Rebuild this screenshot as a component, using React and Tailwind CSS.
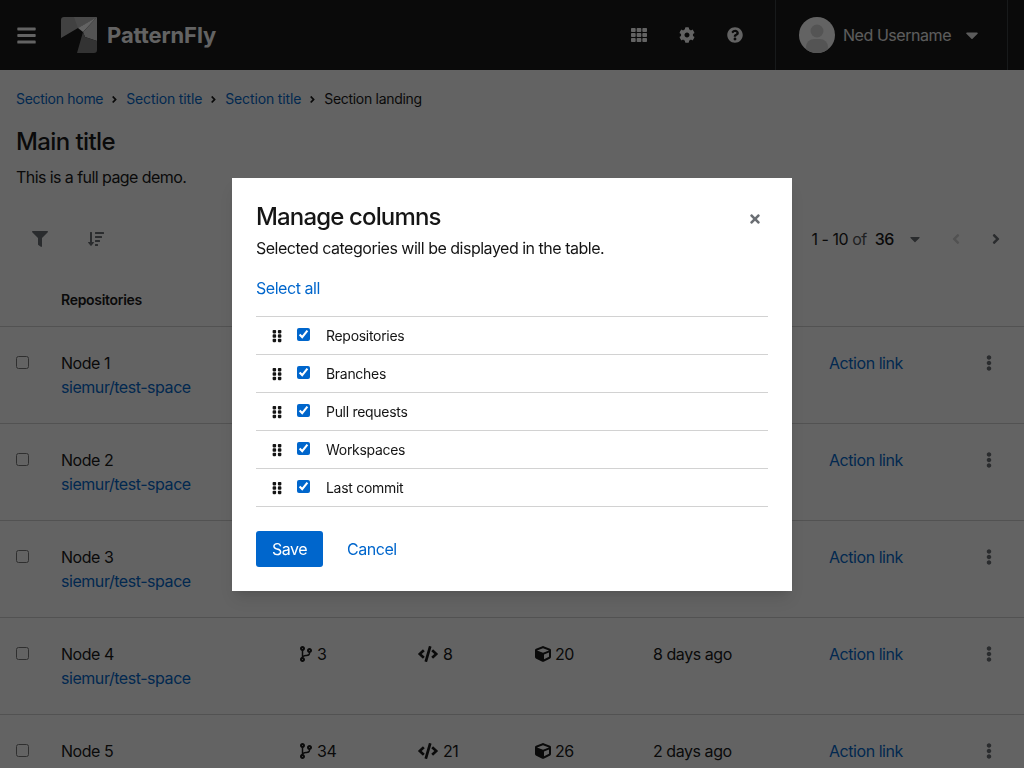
import React from "react";
import { FaBars, FaTh, FaCog, FaQuestionCircle, FaCaretDown, FaAngleRight, FaAngleLeft, FaFilter, FaSortAmountDown, FaEllipsisV, FaCodeBranch, FaCode, FaCube, FaTimes, FaGripVertical } from "react-icons/fa";

const rows = [
  ["Node 1", 10, 4, 5, "1 day ago"],
  ["Node 2", 8, 2, 12, "3 days ago"],
  ["Node 3", 12, 6, 18, "5 days ago"],
  ["Node 4", 3, 8, 20, "8 days ago"],
  ["Node 5", 34, 21, 26, "2 days ago"],
];
const cols = ["Repositories", "Branches", "Pull requests", "Workspaces", "Last commit"];

function Logo() {
  return (
    <svg width="36" height="36" viewBox="0 0 36 36" className="shrink-0">
      <path d="M3 0H36L17 11L0 21V3a3 3 0 0 1 3-3z" fill="#a6a6a6" />
      <path d="M13 0H36L17 11z" fill="#bcbcbc" />
      <path d="M36 0L17 11L22 15z" fill="#ffffff" />
      <path d="M36 0V24L24 20L22 15z" fill="#d4d4d4" />
      <path d="M22 15L24 20L36 24V33a3 3 0 0 1-3 3H16z" fill="#808080" />
    </svg>
  );
}

function Cell({ icon, n, gap }) {
  return (
    <div className={`flex items-start text-base leading-6 text-[#151515] ${gap}`}>
      <span className="flex h-6 items-center">{icon}</span>
      <span>{n}</span>
    </div>
  );
}

export default function App() {
  return (
    <div className="relative h-[768px] w-[1024px] overflow-hidden bg-white font-['Inter','Liberation_Sans',sans-serif] tracking-[-0.45px] text-[#151515]">
      <header className="flex h-[70px] items-center bg-[#151515] text-[#ededed]">
        <FaBars className="ml-4 h-[21px] w-[21px] shrink-0 text-white" />
        <div className="ml-6"><Logo /></div>
        <span className="ml-[10px] text-[22px] font-bold tracking-[-0.1px] text-white">PatternFly</span>
        <div className="ml-auto flex items-center text-white">
          <FaTh className="h-4 w-4" />
          <FaCog className="ml-8 h-4 w-4" />
          <FaQuestionCircle className="ml-8 h-4 w-4" />
        </div>
        <div className="ml-8 mr-[16px] flex h-full w-[233px] items-center border-x border-[#3c3f42] pl-[23px]">
          <svg width="36" height="36" viewBox="0 0 36 36" className="shrink-0">
            <defs><clipPath id="av"><circle cx="18" cy="18" r="18" /></clipPath></defs>
            <circle cx="18" cy="18" r="18" fill="#ffffff" />
            <g clipPath="url(#av)" fill="#d8d8d8">
              <circle cx="18" cy="14" r="6.5" />
              <rect x="7" y="22" width="22" height="16" rx="8" />
            </g>
          </svg>
          <span className="ml-2 text-base">Ned Username</span>
          <FaCaretDown className="ml-[11px] h-5 w-5" />
        </div>
      </header>

      <main>
        <nav className="mt-[17px] flex h-[24px] items-center gap-[6px] pl-4 text-sm tracking-[-0.3px]">
          <span className="text-[#0066cc]">Section home</span>
          <FaAngleRight className="h-[11px] w-[11px]" />
          <span className="tracking-[-0.14px] text-[#0066cc]">Section title</span>
          <FaAngleRight className="h-[11px] w-[11px]" />
          <span className="tracking-[-0.14px] text-[#0066cc]">Section title</span>
          <FaAngleRight className="h-[11px] w-[11px]" />
          <span>Section landing</span>
        </nav>
        <h1 className="mt-[13px] pl-4 text-2xl leading-9 font-medium tracking-[-0.6px]">Main title</h1>
        <p className="mt-[5px] pl-4 text-base leading-6 tracking-[-0.57px]">This is a full page demo.</p>

        <div className="mt-[32px] flex h-9 items-center pl-8 pr-[20px]">
          <FaFilter className="h-4 w-4 text-[#6a6e73]" />
          <FaSortAmountDown className="ml-10 h-4 w-4 text-[#6a6e73]" />
          <div className="ml-auto flex items-center text-base">
            <span>1 - 10</span>
            <span className="ml-1 text-[#4f5255]">of</span>
            <span className="ml-2 font-medium">36</span>
            <FaCaretDown className="ml-[13px] h-4 w-4 text-[#6a6e73]" />
            <FaAngleLeft className="ml-[25px] h-4 w-4 text-[#d2d2d2]" />
            <FaAngleRight className="ml-6 h-4 w-4 text-[#6a6e73]" />
          </div>
        </div>

        <div className="mt-[33px] h-[37px] border-b border-[#d2d2d2] pl-[61px] text-sm font-semibold tracking-[-0.3px]">Repositories</div>

        {rows.map((r) => (
          <div key={r[0]} className="grid h-[97px] grid-cols-[61px_239px_118px_117px_118px_176px_1fr] border-b border-[#d2d2d2] pt-6">
            <div className="pl-4"><input type="checkbox" readOnly className="h-[13px] w-[13px]" /></div>
            <div className="text-base leading-6">
              <div>{r[0]}</div>
              <div className="text-[#0066cc]">siemur/test-space</div>
            </div>
            <Cell gap="gap-[5px]" icon={<FaCodeBranch className="h-4 w-3" />} n={r[1]} />
            <Cell gap="gap-[5px]" icon={<FaCode className="h-4 w-5" />} n={r[2]} />
            <Cell gap="gap-1" icon={<FaCube className="h-4 w-4" />} n={r[3]} />
            <div className="text-base leading-6">{r[4]}</div>
            <div className="flex items-start justify-between pr-[27px] text-base leading-6">
              <span className="text-[#0066cc]">Action link</span>
              <FaEllipsisV className="mt-1 h-4 w-4 text-[#6a6e73]" />
            </div>
          </div>
        ))}
      </main>

      <div className="fixed inset-0 flex items-center justify-center bg-[#030303]/62">
        <div className="relative w-[560px] bg-white p-6 shadow-lg">
          <FaTimes className="absolute right-[30px] top-[34px] h-[14px] w-[14px] text-[#6a6e73]" />
          <h2 className="text-2xl leading-[30px] font-medium tracking-[-0.85px]">Manage columns</h2>
          <p className="mt-1 text-base leading-6 tracking-[-0.49px]">Selected categories will be displayed in the table.</p>
          <div className="mt-4 text-base leading-6 text-[#0066cc]">Select all</div>
          <ul className="mt-4 border-t border-[#d2d2d2]">
            {cols.map((c) => (
              <li key={c} className="flex h-[38px] items-center border-b border-[#d2d2d2] pl-4 pt-[2px] text-sm tracking-[-0.3px]">
                <FaGripVertical className="h-[14px] w-[10px]" />
                <input type="checkbox" checked readOnly className="ml-[15px] h-[13px] w-[13px] -translate-y-[2px] accent-[#0066cc]" />
                <span className="ml-4">{c}</span>
              </li>
            ))}
          </ul>
          <div className="mt-6 flex items-center text-base">
            <span className="flex h-9 w-[67px] items-center justify-center rounded-[3px] bg-[#0066cc] text-white">Save</span>
            <span className="ml-6 text-[#0066cc]">Cancel</span>
          </div>
        </div>
      </div>
    </div>
  );
}
